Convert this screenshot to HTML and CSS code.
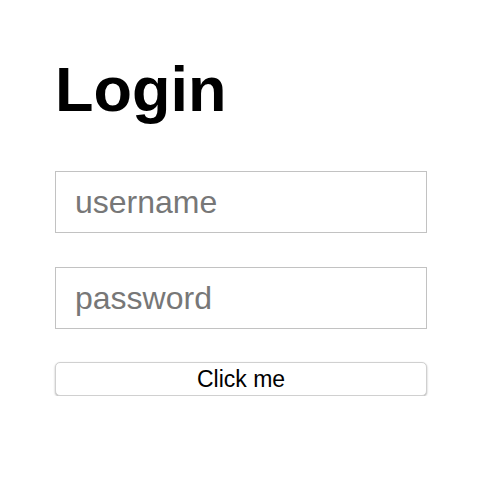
FILE: index.html
```html
<!DOCTYPE html>
<html>
<head>
<meta charset="utf-8">
<link rel="stylesheet" href="styles.css">
</head>
<body>
<div class="page">
  <h1 class="title">Login</h1>
  <form class="form">
    <input class="field" type="text" placeholder="username">
    <input class="field" type="password" placeholder="password">
    <button class="btn" type="button">Click me</button>
  </form>
</div>
</body>
</html>
```

FILE: styles.css
```css
html, body {
  margin: 0;
  padding: 0;
  background: #fff;
}
.page {
  padding: 57px 63px 0 55px;
  font-family: "Liberation Sans", Arial, sans-serif;
}
.title {
  margin: 0;
  font-size: 63px;
  line-height: 64px;
  font-weight: bold;
  color: #000;
}
.form {
  display: flex;
  flex-direction: column;
  margin-top: 50px;
}
.field {
  box-sizing: border-box;
  height: 62px;
  width: 372px;
  margin: 0 0 34px 0;
  padding: 0 19px;
  border: 1px solid #c2c2c2;
  border-radius: 0;
  font-family: "Liberation Sans", Arial, sans-serif;
  font-size: 32px;
  color: #000;
  outline: none;
}
.field::placeholder {
  color: #777;
}
.btn {
  box-sizing: border-box;
  width: 372px;
  height: 34px;
  margin-top: -1px;
  border: 1px solid #d0d0d0;
  border-radius: 5px;
  background: #fff;
  box-shadow: 0 1px 2px rgba(0,0,0,0.3);
  font-family: "Liberation Sans", Arial, sans-serif;
  font-size: 23px;
  color: #000;
  padding: 1px 0 0 0;
}
```
